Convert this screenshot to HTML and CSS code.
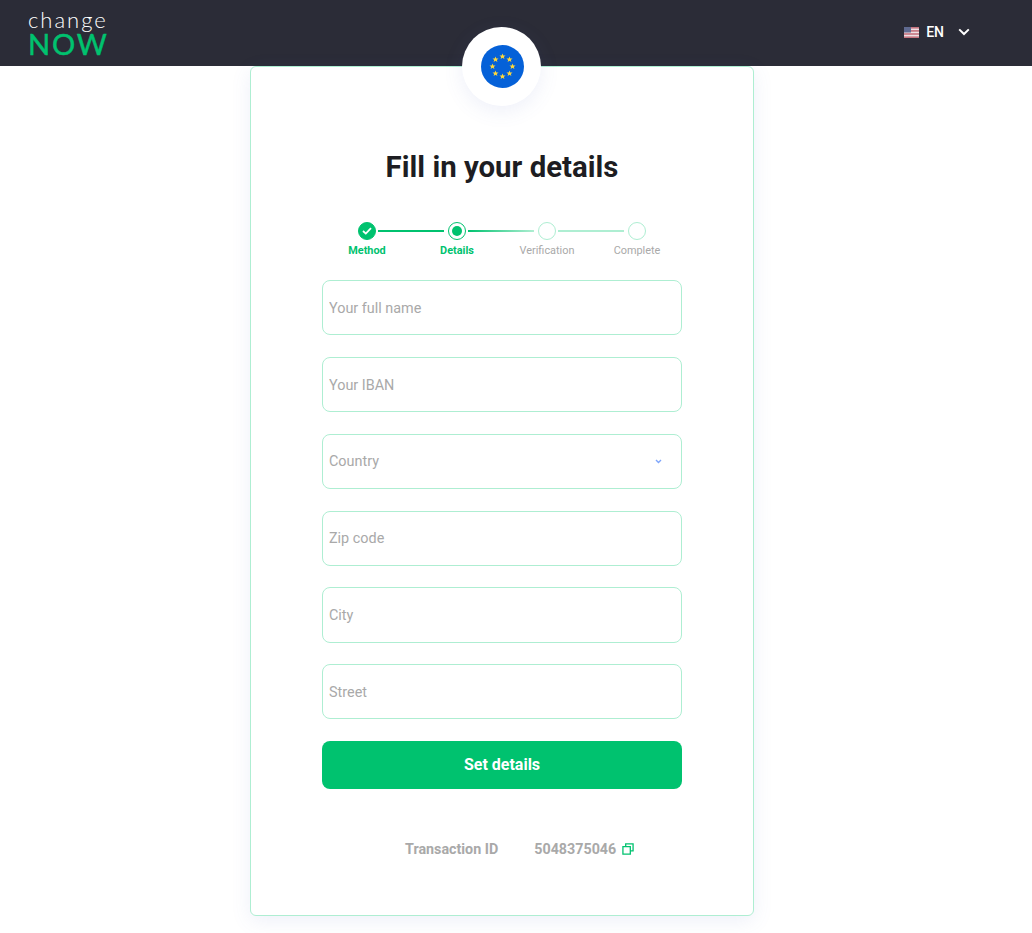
FILE: index.html
```html
<!DOCTYPE html>
<html lang="en">

<head>
    <meta charset="UTF-8">
    <meta name="viewport" content="width=device-width, initial-scale=1.0">
    <title>ChangeNOW</title>
    <link rel="stylesheet" href="styles.css">
</head>

<body>
    <header class="topbar">
        <a class="logo" href="#">
            <span class="logo-top">change</span>
            <span class="logo-now">NOW</span>
        </a>
        <div class="lang">
            <svg class="lang-flag" width="15" height="11" viewBox="0 0 15 11">
                <rect width="15" height="11" fill="#eedfe2" />
                <rect y="0" width="15" height="1.6" fill="#c4737e" />
                <rect y="3.1" width="15" height="1.6" fill="#c4737e" />
                <rect y="6.2" width="15" height="1.6" fill="#c4737e" />
                <rect y="9.4" width="15" height="1.6" fill="#c4737e" />
                <rect width="7" height="5.5" fill="#5f6a90" />
            </svg>
            <span class="lang-code">EN</span>
            <svg class="lang-arrow" width="12" height="8" viewBox="0 0 12 8">
                <path d="M1.2 1.4 6 6 10.8 1.4" fill="none" stroke="#fff" stroke-width="2" />
            </svg>
        </div>
    </header>

    <main class="page">
        <section class="card">
            <div class="badge">
                <svg class="badge-flag" width="43" height="43" viewBox="0 0 43 43">
                    <defs>
                        <polygon id="star" points="0,-3 .8,-1 3,-.9 1.3,.4 1.9,2.5 0,1.3 -1.9,2.5 -1.3,.4 -3,-.9 -.8,-1" fill="#ffd83a" />
                    </defs>
                    <circle cx="21.5" cy="21.5" r="21.5" fill="#0561d8" />
                    <use href="#star" x="21.5" y="11.5" />
                    <use href="#star" x="28.5" y="14.5" />
                    <use href="#star" x="31.5" y="21.5" />
                    <use href="#star" x="28.5" y="28.5" />
                    <use href="#star" x="21.5" y="31.5" />
                    <use href="#star" x="14.5" y="28.5" />
                    <use href="#star" x="11.5" y="21.5" />
                    <use href="#star" x="14.5" y="14.5" />
                </svg>
            </div>

            <h1 class="title">Fill in your details</h1>

            <ol class="steps">
                <li class="step done">
                    <span class="dot">
                        <svg width="10" height="8" viewBox="0 0 10 8">
                            <path d="M1 4 3.8 6.6 9 1.2" fill="none" stroke="#fff" stroke-width="1.8" />
                        </svg>
                    </span>
                    <span class="step-name">Method</span>
                </li>
                <li class="step active">
                    <span class="dot"></span>
                    <span class="step-name">Details</span>
                </li>
                <li class="step next">
                    <span class="dot"></span>
                    <span class="step-name">Verification</span>
                </li>
                <li class="step last">
                    <span class="dot"></span>
                    <span class="step-name">Complete</span>
                </li>
            </ol>

            <form class="fields">
                <input class="field" type="text" placeholder="Your full name">
                <input class="field" type="text" placeholder="Your IBAN">
                <div class="field field-select">
                    <span>Country</span>
                    <svg width="7" height="5" viewBox="0 0 7 5">
                        <path d="M1 1 3.5 3.5 6 1" fill="none" stroke="#7fa6fb" stroke-width="1.4" />
                    </svg>
                </div>
                <input class="field" type="text" placeholder="Zip code">
                <input class="field" type="text" placeholder="City">
                <input class="field" type="text" placeholder="Street">
                <button class="submit" type="button">Set details</button>
            </form>

            <div class="txn">
                <span class="txn-label">Transaction ID</span>
                <span class="txn-id">5048375046</span>
                <svg class="txn-copy" width="12" height="12" viewBox="0 0 13 13">
                    <path d="M4 3.5V1H12V8.5H9M1 4H9V12H1Z" fill="none" stroke="#00c26f" stroke-width="1.4" />
                </svg>
            </div>
        </section>
    </main>
</body>

</html>
```

FILE: styles.css
```css
body {
    margin: 0;
    padding: 0;
    background-color: #fff;
    font-family: 'Roboto', sans-serif;
    color: #1d1d22;
}

.topbar {
    height: 66px;
    background-color: #2b2c37;
    display: flex;
    align-items: center;
    justify-content: space-between;
    padding: 0 62px 0 28px;
}

.logo {
    display: flex;
    flex-direction: column;
    text-decoration: none;
    font-family: 'Lato', sans-serif;
}

.logo-top {
    color: #fff;
    font-size: 22px;
    font-weight: 300;
    line-height: 20px;
    letter-spacing: 2px;
}

.logo-now {
    color: #00c26f;
    font-size: 29px;
    font-weight: 400;
    line-height: 27px;
    letter-spacing: 1.8px;
    -webkit-text-stroke: 0.5px #00c26f;
}

.lang {
    display: flex;
    align-items: center;
    color: #fff;
    font-size: 14px;
    font-weight: 500;
    padding-bottom: 2px;
}

.lang-flag {
    margin-right: 7px;
}

.lang-arrow {
    margin-left: 14px;
}

.page {
    display: flex;
    justify-content: center;
    padding: 0 28px 17px 0;
}

.card {
    position: relative;
    width: 504px;
    height: 850px;
    box-sizing: border-box;
    border: 1px solid #aeeed2;
    border-radius: 6px;
    padding: 0 71px;
    box-shadow: 0 5px 20px rgba(90, 110, 200, 0.1);
    background-color: #fff;
}

.badge {
    position: absolute;
    top: -40px;
    left: 211px;
    width: 79px;
    height: 79px;
    border-radius: 50%;
    background-color: #fff;
    display: flex;
    align-items: center;
    justify-content: center;
    box-shadow: 0 5px 20px rgba(90, 110, 200, 0.1);
}

.badge-flag {
    margin-left: 1px;
}

.title {
    margin: 82px 0 0;
    font-size: 29.4px;
    line-height: 36px;
    font-weight: 700;
    text-align: center;
    color: #1d1d22;
}

.steps {
    list-style: none;
    margin: 37px 0 0;
    padding: 0;
    display: flex;
    justify-content: center;
}

.step {
    position: relative;
    width: 90px;
    display: flex;
    flex-direction: column;
    align-items: center;
    font-size: 10.9px;
    line-height: 13px;
    color: #a9a9a9;
}

/* line to the following step */
.step::after {
    content: "";
    position: absolute;
    top: 8px;
    left: 56px;
    width: 66px;
    height: 2px;
    background-color: #aeeed2;
}

.step.done::after {
    background-color: #00c26f;
}

.step.active::after {
    background: linear-gradient(to right, #00c26f, #aeeed2);
}

.step.last::after {
    display: none;
}

.dot {
    width: 18px;
    height: 18px;
    box-sizing: border-box;
    border: 1px solid #aeeed2;
    border-radius: 50%;
    background-color: #fff;
    display: flex;
    align-items: center;
    justify-content: center;
    margin-bottom: 4px;
}

.step.done .dot {
    border-color: #00c26f;
    background-color: #00c26f;
}

.step.active .dot {
    border-color: #00c26f;
}

.step.active .dot::before {
    content: "";
    width: 10px;
    height: 10px;
    border-radius: 50%;
    background-color: #00c26f;
}

.step.done .step-name,
.step.active .step-name {
    color: #00c26f;
    font-weight: 700;
}

.fields {
    margin-top: 23.2px;
    display: flex;
    flex-direction: column;
}

.field {
    height: 55.2px;
    box-sizing: border-box;
    margin: 0 0 21.6px;
    padding: 1px 6px 0;
    border: 1px solid #aeeed2;
    border-radius: 8px;
    background-color: #fff;
    font-family: 'Roboto', sans-serif;
    font-size: 14.4px;
    outline: none;
}

.field::placeholder {
    color: #a9a9a9;
    opacity: 1;
}

.field-select {
    display: flex;
    align-items: center;
    justify-content: space-between;
    padding: 0 19px 0 6px;
    color: #a9a9a9;
}

.submit {
    height: 48px;
    border: none;
    border-radius: 8px;
    background-color: #00c26f;
    color: #fff;
    font-family: 'Roboto', sans-serif;
    font-size: 16px;
    font-weight: 700;
}

.txn {
    margin-top: 51.8px;
    display: flex;
    align-items: center;
    padding-left: 83px;
    font-size: 14.3px;
    font-weight: 700;
    color: #a9a9a9;
}

.txn-id {
    margin-left: 36px;
}

.txn-copy {
    margin-left: 6px;
}
```
